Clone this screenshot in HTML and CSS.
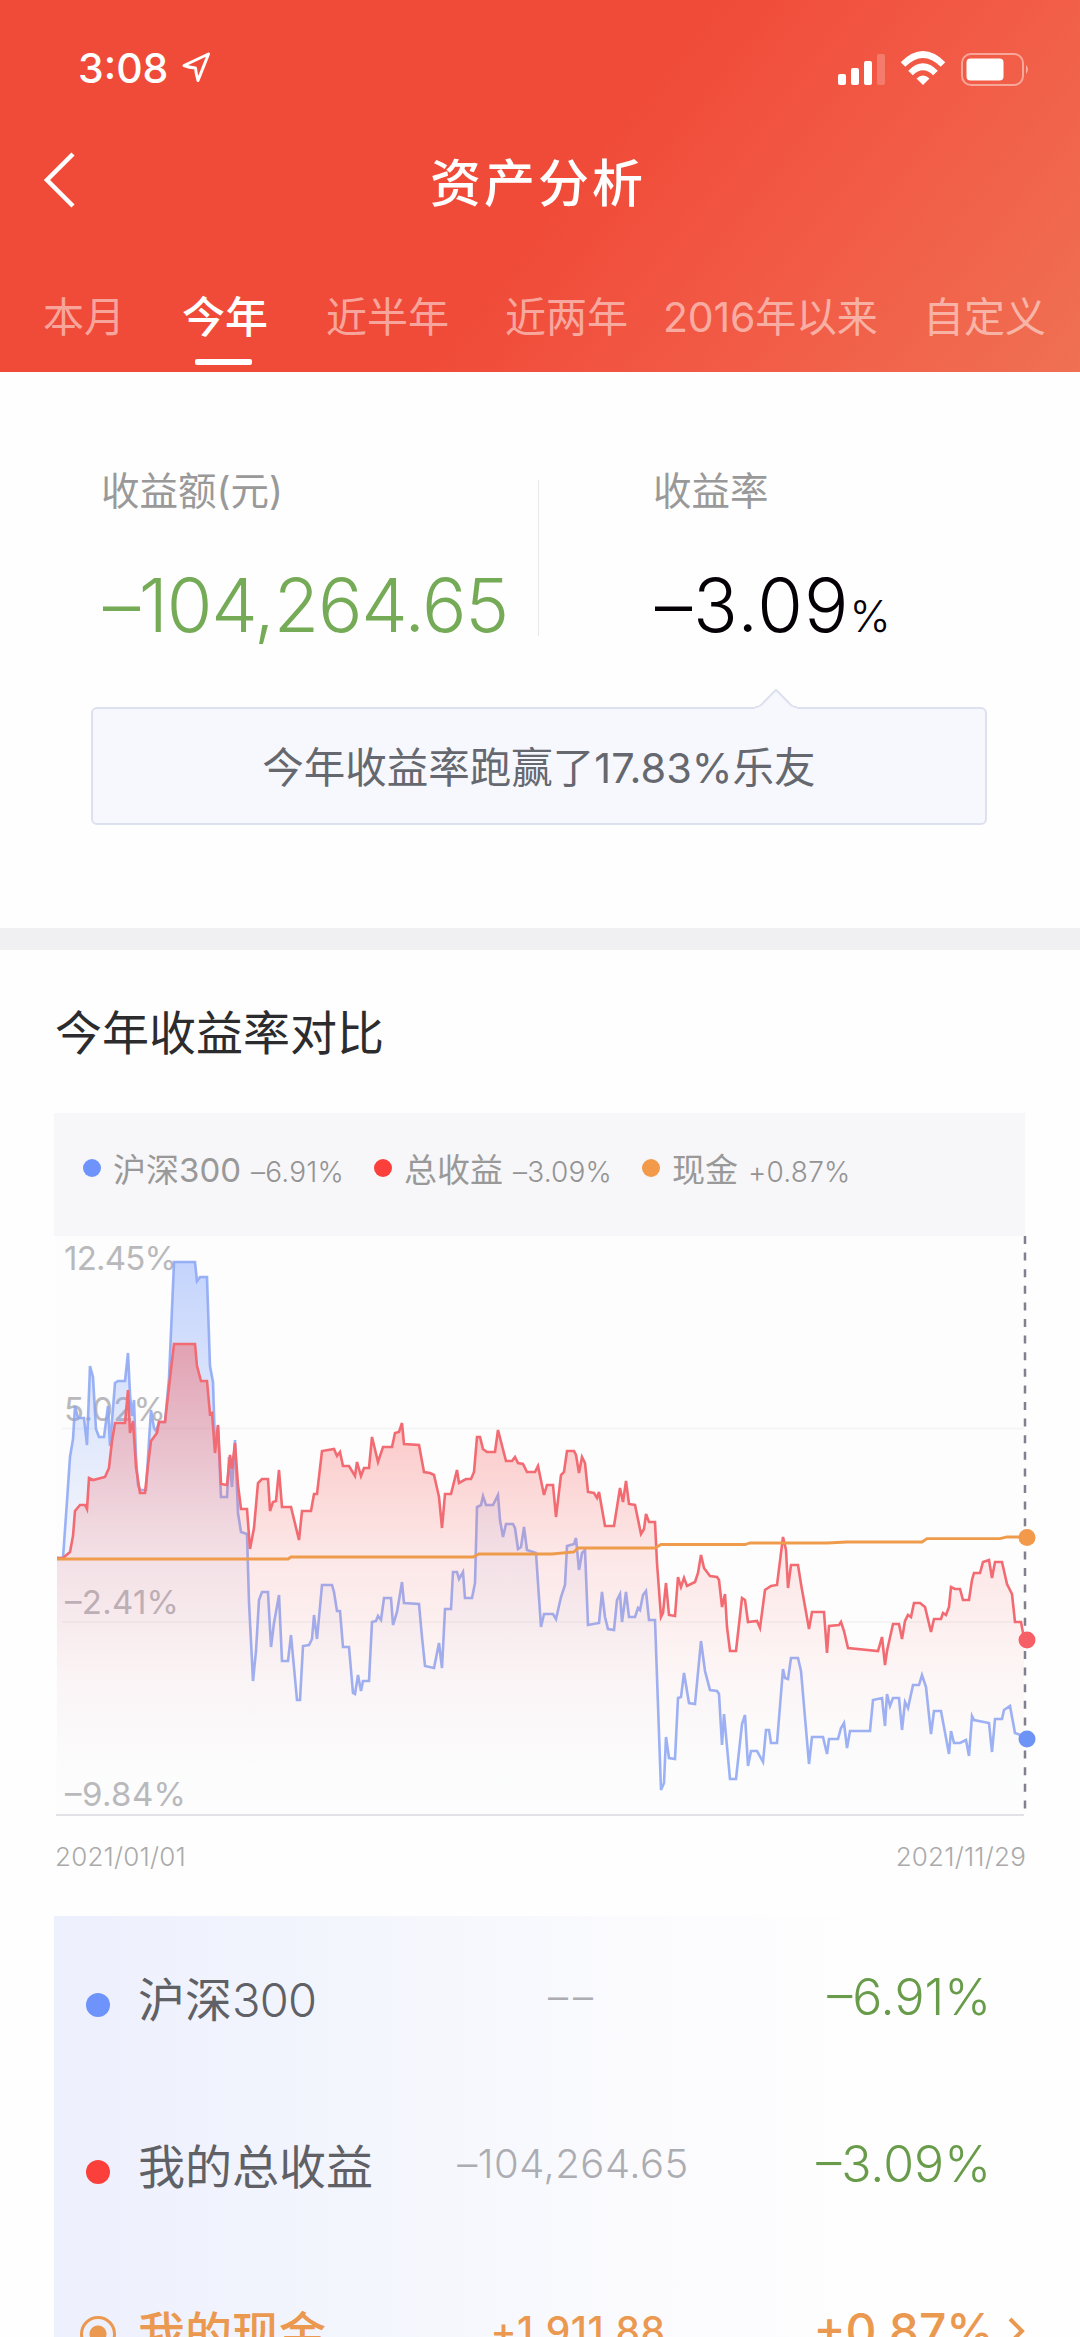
FILE: index.html
```html
<!DOCTYPE html>
<html lang="zh-CN">
<head>
<meta charset="utf-8">
<title>资产分析</title>
<link rel="stylesheet" href="styles.css">
</head>
<body>
<header class="hero">
  <div class="status">
    <span class="clock">3:08</span>
    <svg class="loc" width="30" height="32" viewBox="0 0 30 32"><path d="M27.500 3 L3 14.500 Q8 16.500 14.500 17 Q15 23 17 29.500 Z" fill="none" stroke="#fff" stroke-width="3" stroke-linejoin="round"/></svg>
    <svg class="sys" width="194" height="40" viewBox="836 48 194 40">
      <g fill="#fff">
        <rect x="837" y="73" width="8" height="11" rx="2"/><rect x="850" y="67" width="8" height="17" rx="2"/><rect x="863" y="60" width="8" height="24" rx="2"/><rect x="876" y="53" width="8" height="31" rx="2" opacity=".22"/>
        <rect x="965.500" y="57.500" width="37" height="22" rx="4"/>
        <path d="M1025 64 q4 4 0 9z" opacity=".5"/>
        <path d="M922 84 L915.500 77.500 Q922 71.500 928.500 77.500Z"/>
      </g>
      <rect x="961" y="53" width="61" height="31" rx="9" fill="none" stroke="#fff" stroke-width="2" opacity=".45"/>
      <g fill="none" stroke="#fff" stroke-width="6.500"><path d="M902 63.500 Q922 43.500 942 63.500"/><path d="M909.500 72 Q922 59.500 934.500 72"/></g>
    </svg>
  </div>
  <div class="titlebar">
    <svg class="back" width="34" height="58" viewBox="0 0 34 58"><path d="M30 3 L4 29 L30 55" fill="none" stroke="#fff" stroke-width="4.500"/></svg>
    <h1>资产分析</h1>
  </div>
  <nav class="tabs">
    <a>本月</a><a class="on">今年</a><a>近半年</a><a>近两年</a><a>2016年以来</a><a>自定义</a>
  </nav>
</header>
<section class="summary">
  <div class="figures">
    <div class="amount"><p class="label">收益额(元)</p><p class="value green">–104,264.65</p></div>
    <div class="rate"><p class="label">收益率</p><p class="value">–3.09<small>%</small></p></div>
  </div>
  <div class="tip">今年收益率跑赢了17.83%乐友
    <svg class="arrow" width="44" height="24" viewBox="0 0 44 24"><path d="M0 20 Q5 20 8 16 L21 3 L34 16 Q37 20 42 20 V24 H0Z" fill="#f7f8fd"/><path d="M0 20 Q5 20 8 16 L21 3 L34 16 Q37 20 42 20" fill="none" stroke="#dde1ee" stroke-width="2"/></svg>
  </div>
</section>
<section class="compare">
  <h2>今年收益率对比</h2>
  <div class="legend">
    <span class="key"><i class="dot blue"></i>沪深300<em>–6.91%</em></span>
    <span class="key"><i class="dot red"></i>总收益<em>–3.09%</em></span>
    <span class="key"><i class="dot orange"></i>现金<em>+0.87%</em></span>
  </div>
  <svg class="chart" width="1026" height="584" viewBox="54 1236 1026 584">
    <defs>
      <linearGradient id="gb" gradientUnits="userSpaceOnUse" x1="0" y1="1262" x2="0" y2="1815"><stop offset="0" stop-color="#6e96fb" stop-opacity=".4"/><stop offset=".5" stop-color="#7fa0f0" stop-opacity=".1"/><stop offset=".72" stop-color="#8f9fd8" stop-opacity=".03"/><stop offset="1" stop-color="#7fa0f0" stop-opacity="0"/></linearGradient>
      <linearGradient id="gr" gradientUnits="userSpaceOnUse" x1="0" y1="1344" x2="0" y2="1815"><stop offset="0" stop-color="#f85050" stop-opacity=".42"/><stop offset=".45" stop-color="#f86060" stop-opacity=".14"/><stop offset=".72" stop-color="#f86060" stop-opacity=".04"/><stop offset=".9" stop-color="#f86060" stop-opacity="0"/></linearGradient>
      <clipPath id="plot"><rect x="57" y="1236" width="967" height="579"/></clipPath>
    </defs>
    <rect x="56" y="1236" width="969" height="579" fill="#fdfdfd"/>
    <path d="M62 1428.500H1024M62 1622H1024" stroke="#f3f5f4" stroke-width="2"/>
    <path d="M56 1815H1024" stroke="#e2e2e6" stroke-width="2"/>
    <g class="axis"><text x="64" y="1270" textLength="113">12.45%</text><text x="64" y="1421" textLength="102">5.02%</text><text x="65" y="1614" textLength="114">–2.41%</text><text x="65" y="1806" textLength="121">–9.84%</text></g>
    <g clip-path="url(#plot)" stroke-width="2.600">
    <path fill="url(#gb)" stroke="#8aa4f4" stroke-opacity=".85" d="M40 1900V1558H63L67 1501 70 1457 73 1439 75 1406 78 1418 84 1418 87 1445 90 1366 93 1377 96 1429 99 1437 104 1437 108 1406 110 1446 115 1383 118 1381 125 1381 128 1353 130 1394 132 1416 134 1400 136 1457 138 1485 140 1490 146 1490 149 1441 151 1410 154 1428 156 1431 159 1422 165 1422 169 1378 174 1262 195 1262 197 1281 200 1277 207 1277 210 1366 213 1382 215 1445 218 1426 221 1497 227 1497 229 1457 232 1487 235 1440 238 1513 241 1532 247 1534 249 1602 253 1681 256 1651 259 1600 262 1592 268 1592 271 1647 274 1623 279 1595 282 1661 288 1661 291 1635 297 1700 300 1700 303 1646 309 1645 312 1639 314 1615 317 1639 322 1585 332 1585 334 1592 337 1611 340 1611 343 1647 349 1647 353 1693 355 1694 358 1675 361 1691 363 1681 369 1681 372 1622 376 1621 378 1616 381 1620 384 1598 391 1598 393 1625 397 1612 402 1582 404 1603 419 1604 422 1637 425 1666 434 1668 439 1643 442 1668 445 1609 451 1609 453 1572 457 1572 459 1579 463 1572 465 1598 472 1598 475 1583 477 1507 481 1505 483 1496 486 1505 493 1505 498 1495 500 1520 503 1537 506 1524 513 1524 515 1528 518 1549 521 1547 524 1527 527 1550 536 1553 538 1583 541 1627 544 1614 553 1614 556 1619 561 1597 565 1585 567 1546 574 1544 576 1538 579 1570 582 1553 585 1550 588 1625 599 1623 602 1592 605 1617 608 1629 614 1630 617 1600 620 1594 622 1622 626 1592 629 1617 635 1617 638 1608 640 1610 643 1595 646 1591 649 1620 655 1620 661 1790 664 1783 666 1737 669 1758 675 1759 678 1698 681 1697 684 1673 689 1703 695 1704 701 1641 705 1671 710 1690 717 1691 719 1694 722 1745 724 1714 730 1779 736 1779 742 1724 745 1715 748 1766 751 1751 757 1751 763 1762 766 1730 769 1730 771 1743 777 1743 780 1706 783 1669 785 1678 788 1679 791 1658 798 1658 801 1671 809 1764 812 1737 823 1737 827 1754 829 1739 838 1739 841 1728 844 1723 847 1748 850 1731 870 1731 873 1700 882 1698 885 1726 887 1694 890 1706 893 1698 899 1698 902 1730 905 1702 908 1708 913 1685 919 1685 922 1675 926 1687 931 1734 934 1711 941 1711 949 1754 951 1731 954 1743 960 1743 966 1740 969 1756 972 1716 974 1720 989 1723 992 1752 995 1719 1002 1719 1004 1710 1010 1706 1015 1733 1023 1736 1060 1739V1900Z"/>
    <path fill="url(#gr)" stroke="#f26b72" d="M40 1900V1558H63L70 1552 73 1536 75 1511 80 1505 85 1505 87 1509 89 1478 93 1480 105 1477 109 1468 112 1441 115 1423 125 1423 128 1390 130 1433 133 1421 136 1467 140 1493 145 1493 148 1465 151 1441 157 1433 159 1422 165 1422 170 1378 174 1344 195 1344 197 1366 201 1381 207 1381 210 1414 212 1413 215 1453 218 1425 221 1484 227 1485 230 1455 232 1469 235 1443 238 1485 241 1509 247 1509 250 1549 254 1528 258 1483 262 1479 268 1479 270 1511 273 1502 276 1501 279 1470 282 1507 291 1507 299 1540 302 1511 311 1511 314 1494 317 1494 322 1451 334 1449 337 1456 340 1452 343 1466 349 1466 355 1476 357 1462 361 1476 364 1468 369 1468 372 1437 378 1462 383 1447 392 1447 395 1433 399 1432 402 1423 404 1444 419 1445 424 1472 430 1473 434 1475 437 1488 439 1497 442 1528 445 1494 451 1494 457 1470 459 1483 466 1479 471 1479 474 1472 477 1437 480 1437 483 1449 487 1452 495 1452 498 1430 506 1461 512 1461 515 1457 518 1463 523 1464 527 1472 535 1472 538 1466 544 1495 547 1485 553 1485 556 1517 561 1475 564 1472 567 1451 574 1451 576 1455 579 1473 582 1457 585 1463 588 1492 594 1493 597 1498 599 1492 605 1526 614 1526 620 1488 623 1502 626 1481 629 1504 635 1505 641 1534 644 1529 646 1514 649 1522 655 1522 657 1563 661 1617 663 1613 666 1583 669 1615 675 1616 678 1577 681 1587 684 1578 687 1586 695 1582 698 1573 701 1555 704 1568 710 1576 717 1577 719 1580 722 1607 725 1594 727 1627 730 1651 736 1651 742 1598 745 1600 748 1622 757 1621 760 1628 765 1590 771 1586 777 1585 783 1537 786 1550 788 1588 791 1565 798 1565 801 1584 809 1629 812 1612 824 1612 827 1653 829 1626 839 1625 841 1622 844 1631 848 1648 878 1651 882 1637 885 1665 887 1651 893 1624 899 1624 902 1639 905 1621 908 1615 911 1617 914 1603 920 1603 925 1607 931 1632 934 1619 941 1619 943 1613 946 1615 949 1607 951 1587 955 1589 960 1589 963 1600 969 1600 972 1580 974 1573 980 1573 983 1562 989 1560 992 1578 995 1562 1002 1562 1007 1584 1012 1594 1015 1622 1021 1622 1023 1633 1060 1640V1900Z"/>
    </g>
    <path fill="none" stroke="#ee9b4b" stroke-width="2.800" d="M57 1559H288L291 1557H473L479 1554H552L574 1552 578 1548H655L661 1544.500H745L750 1543H827L847 1542H922L927 1538.700H1000L1007 1537H1027"/>
    <path d="M1025 1236V1815" stroke="#80808f" stroke-width="2.500" stroke-dasharray="8 8.600"/>
    <circle cx="1027" cy="1537.500" r="8.500" fill="#f2994a"/><circle cx="1027" cy="1640" r="8.500" fill="#f65f65"/><circle cx="1027" cy="1739" r="8.500" fill="#6e93f6"/>
  </svg>
  <div class="dates"><span>2021/01/01</span><span>2021/11/29</span></div>
  <div class="table">
    <div class="row"><i class="dot blue"></i><span class="name">沪深<b>300</b></span><span class="mid none">––</span><span class="pct green">–6.91%</span></div>
    <div class="row"><i class="dot red"></i><span class="name">我的总收益</span><span class="mid">–104,264.65</span><span class="pct green">–3.09%</span></div>
    <div class="row cash"><i class="ring"></i><span class="name">我的现金</span><span class="mid">+1,911.88</span><span class="pct">+0.87%</span><svg class="go" width="18" height="28" viewBox="0 0 18 28"><path d="M2 2L14 14L2 26" fill="none" stroke="#eb9850" stroke-width="4"/></svg></div>
  </div>
</section>
</body>
</html>
```
FILE: styles.css
```css
* { box-sizing: border-box; }
body, h1, h2, p { margin: 0; font-weight: 400; }
body { width: 1080px; height: 2337px; overflow: hidden; background: #fefefe; font-family: Inter, "Noto Sans CJK SC", sans-serif; color: #222; }
svg { display: block; flex: none; }
i, em { font-style: normal; }
.hero { height: 372px; background: linear-gradient(128deg, #f04a38 0%, #f04b39 52%, #f25c47 75%, #ef7052 100%); color: #fff; }
.status { height: 118px; padding: 20px 49px 0 78px; display: flex; align-items: center; }
.clock { font-size: 41px; font-weight: 500; width: 103px; white-space: nowrap; margin-top: -2px; }
.loc { margin-top: -4px; }
.sys { margin-left: auto; }
.titlebar { height: 124px; padding: 0 42px; display: flex; align-items: center; }
.titlebar h1 { flex: 1; text-align: center; font-size: 51px; font-weight: 500; letter-spacing: 3px; margin-right: 39px; }
.back { margin-left: 1px; margin-top: -1px; }
.tabs { height: 130px; display: flex; padding: 45px 0 0 43px; font-size: 41px; line-height: 60px; color: rgba(255,255,255,.52); white-space: nowrap; }
.tabs .on { color: #fff; font-weight: 500; font-size: 43px; display: flex; flex-direction: column; align-items: center; margin: 0 58px 0 57px; }
.tabs .on::after { content: ""; width: 57px; height: 6px; margin: 12px 3px 0 0; background: #fff; border-radius: 2px; flex: none; }
.tabs a:nth-child(4) { margin: 0 35px 0 56px; }
.tabs a:nth-child(5) { letter-spacing: -.2px; width: 260px; }
.summary { height: 578px; padding-top: 94px; border-bottom: 22px solid #f0f0f2; }
.figures { display: flex; height: 180px; }
.amount { width: 539px; padding-left: 101px; background: linear-gradient(#e8e8ea, #e8e8ea) right 14px / 1px 156px no-repeat; }
.rate { padding-left: 114px; }
.label { font-size: 38.5px; line-height: 50px; color: #999; }
.value { font-size: 74px; font-weight: 350; line-height: 90px; margin-top: 44px; color: #050005; white-space: nowrap; padding-left: 2px; letter-spacing: 1px; }
.value.green { letter-spacing: -1.2px; }
.value small { font-size: 44px; font-weight: 350; }
.green { color: #75ab56; }
.tip { position: relative; width: 896px; height: 118px; margin: 61px 0 0 91px; border: 2px solid #dde1ee; border-radius: 6px; background: #f7f8fd; font-size: 41.5px; line-height: 118px; text-align: center; color: #666870; }
.arrow { position: absolute; left: 662px; top: -22px; }
.compare h2 { height: 163px; padding: 50px 0 0 55px; font-size: 47px; line-height: 66px; color: #2c2c2e; }
.legend { margin-left: 54px; width: 971px; height: 123px; padding: 0 0 13px 29px; display: flex; align-items: center; background: #f7f6f8; font-size: 33px; color: #999; }
.key { display: flex; align-items: baseline; margin-right: 30px; white-space: nowrap; }
.key em { font-size: 28px; font-weight: 350; letter-spacing: .2px; margin-left: 10px; color: #939393; }
.dot { flex: none; border-radius: 50%; width: 18px; height: 18px; }
.key .dot { margin-right: 12px; align-self: center; }
.blue { background: #6e93fb; }
.red { background: #fb403b; }
.orange { background: #f2994a; }
.chart { margin-left: 54px; }
.axis { font-size: 33px; fill: #b9b9bc; }
.dates { display: flex; justify-content: space-between; padding: 20px 54px 0 55px; height: 96px; font-size: 26px; font-weight: 300; letter-spacing: .2px; line-height: 34px; color: #aaa; }
.table { margin-left: 54px; width: 972px; height: 421px; background: linear-gradient(90deg, #edf0fd 0%, #f5f7fd 38%, #fbfbfe 60%, #fefefe 85%); overflow: hidden; }
.row { height: 167px; padding: 0 35px 6px 32px; display: flex; align-items: center; color: #606166; white-space: nowrap; }
.row .dot { width: 24px; height: 24px; margin-top: 16px; }
.name { margin-left: 28px; width: 290px; font-size: 47px; }
.name b { font-weight: 350; letter-spacing: -.8px; }
.mid { width: 290px; text-align: center; font-size: 40px; font-weight: 350; letter-spacing: .5px; color: #acadb2; }
.none { letter-spacing: 5px; font-feature-settings: "calt" 0; }
.pct { margin-left: auto; font-size: 50px; font-weight: 350; }
.pct.green { color: #689c4a; }
.row.cash { padding: 0 0 6px 26px; }
.cash, .cash .mid, .cash .pct { color: #eb9850; font-weight: 500; }
.cash .mid { font-size: 39px; padding-left: 10px; }
.cash .pct { font-size: 48px; }
.cash .name { margin-left: 22px; }
.ring { flex: none; width: 36px; height: 36px; margin-top: 6px; border: 3px solid #eb9850; border-radius: 50%; background: radial-gradient(circle, #eb9850 8px, transparent 9px); }
.go { margin-left: 14px; }
```
